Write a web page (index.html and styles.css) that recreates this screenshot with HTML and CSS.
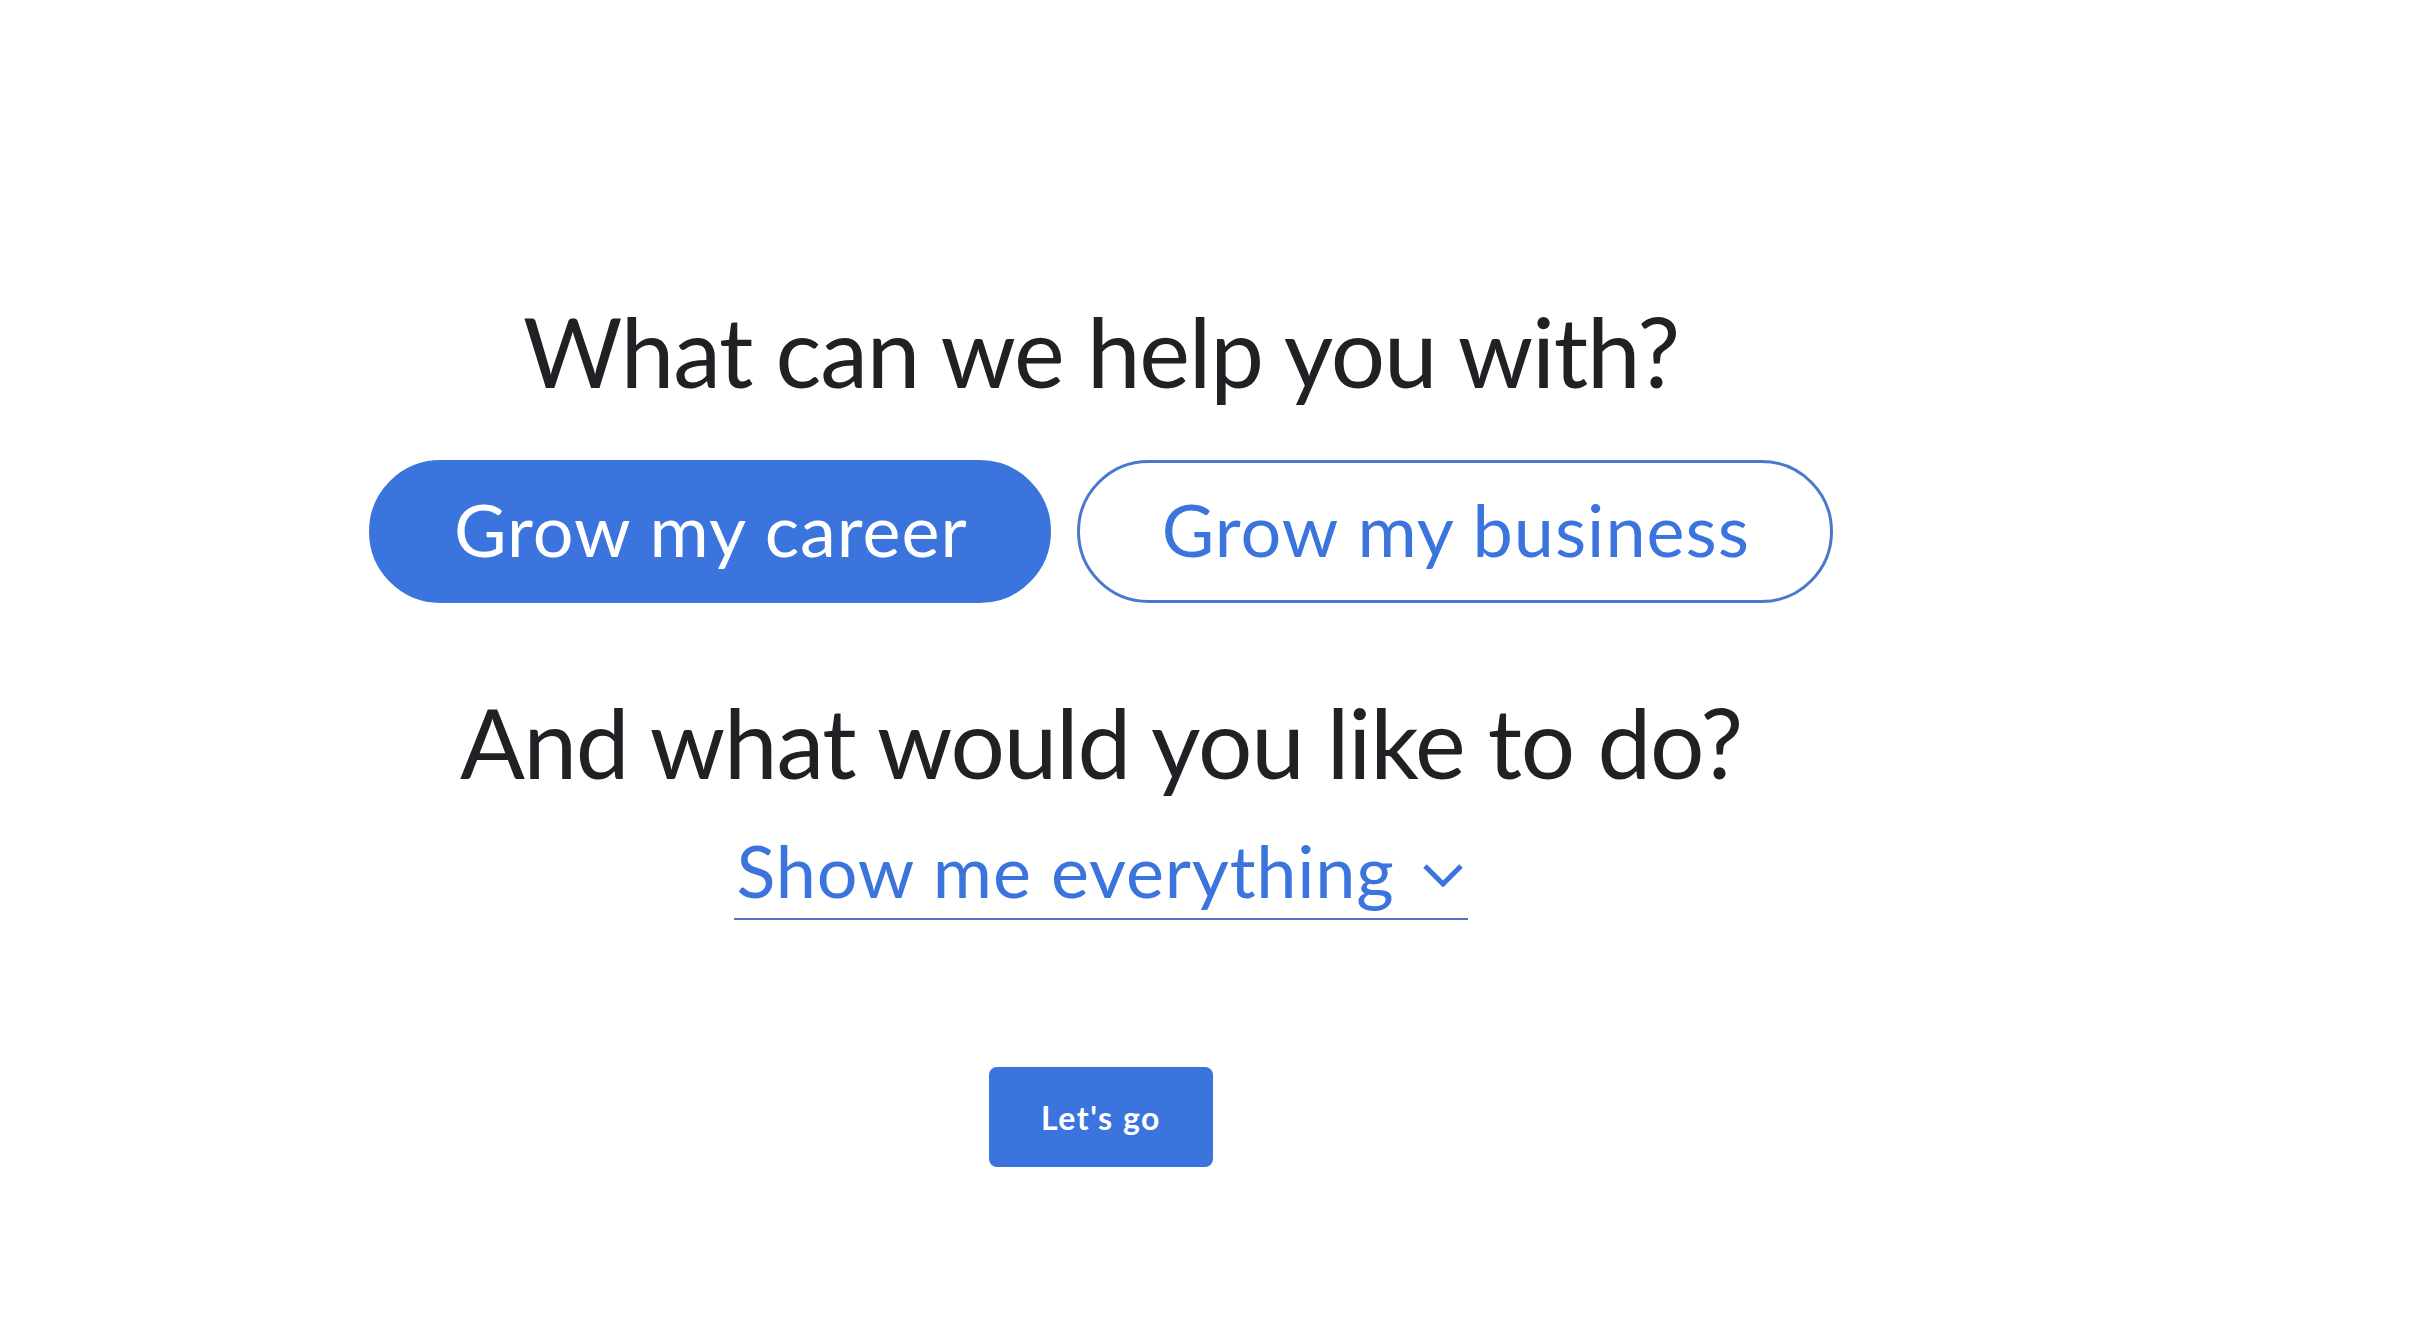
FILE: index.html
```html
<!DOCTYPE html>
<html lang="en">
<head>
<meta charset="utf-8">
<title>What can we help you with?</title>
<link rel="stylesheet" href="styles.css">
</head>
<body>
<main class="page">
  <section class="chooser">
    <h1 class="question">What can we help you with?</h1>
    <div class="goals">
      <button class="goal goal-active" type="button">Grow my career</button>
      <button class="goal" type="button">Grow my business</button>
    </div>
    <h2 class="question question-second">And what would you like to do?</h2>
    <button class="dropdown" type="button"><span class="dropdown-label">Show me everything</span><svg class="chevron" viewBox="0 0 42 24" width="42" height="24" aria-hidden="true"><polyline points="3,3 21,21 39,3" fill="none" stroke="#3b74dc" stroke-width="5" stroke-linecap="butt" stroke-linejoin="miter"/></svg></button>
    <button class="go" type="button">Let's go</button>
  </section>
</main>
</body>
</html>
```

FILE: styles.css
```css
html, body {
  margin: 0;
  padding: 0;
  background: #ffffff;
}

body {
  font-family: "Lato", "Liberation Sans", sans-serif;
  color: #202124;
}

.page {
  width: 2202px;
  min-height: 1332px;
}

.chooser {
  display: flex;
  flex-direction: column;
  align-items: center;
  padding-top: 293px;
}

.question {
  margin: 0;
  font-size: 96px;
  line-height: 115px;
  font-weight: 400;
  letter-spacing: -1.2px;
  color: #202124;
  white-space: nowrap;
}

.goals {
  display: flex;
  gap: 26px;
  margin-top: 52px;
}

.goal {
  font-family: inherit;
  font-size: 72px;
  line-height: 86px;
  font-weight: 400;
  letter-spacing: 1px;
  height: 143px;
  padding: 0 80px 6px 82px;
  border-radius: 72px;
  border: 3px solid #4a78cc;
  background: #ffffff;
  color: #3b74dc;
  cursor: pointer;
  white-space: nowrap;
}

.goal-active {
  background: #3b74dc;
  border-color: #3b74dc;
  color: #ffffff;
}

.question-second {
  margin-top: 81px;
}

.dropdown {
  margin-top: 28px;
  display: inline-flex;
  align-items: baseline;
  gap: 27px;
  padding: 0 4px 5px 2px;
  border: 0;
  border-bottom: 2px solid #4a76c4;
  background: transparent;
  font-family: inherit;
  font-size: 72px;
  line-height: 86px;
  letter-spacing: 0.8px;
  color: #3b74dc;
  cursor: pointer;
}

.chevron {
  display: block;
  align-self: flex-end;
  margin-bottom: 26px;
}

.go {
  margin-top: 147px;
  width: 224px;
  height: 100px;
  border: 0;
  border-radius: 8px;
  background: #3b74dc;
  color: #ffffff;
  font-family: inherit;
  font-size: 32px;
  font-weight: 700;
  letter-spacing: 1.5px;
  cursor: pointer;
}
```
